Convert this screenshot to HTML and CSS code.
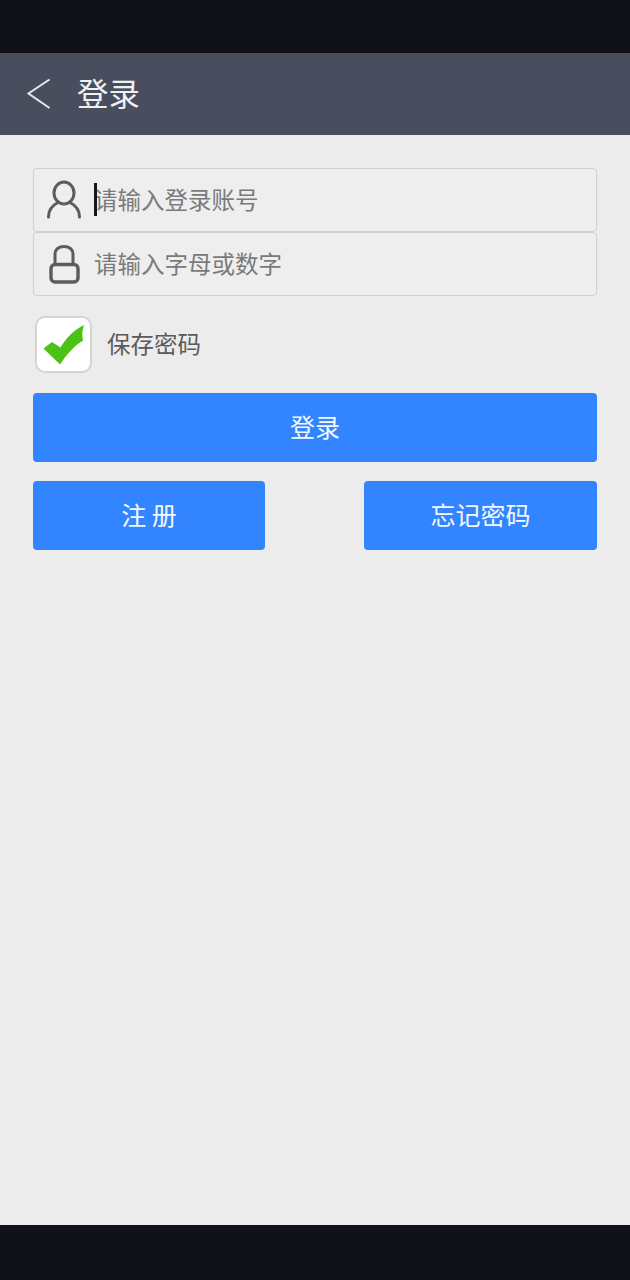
FILE: index.html
```html
<!DOCTYPE html>
<html lang="zh">
<head>
<meta charset="utf-8">
<title>登录</title>
<link rel="stylesheet" href="styles.css">
</head>
<body>
<div class="screen">
  <div class="status-bar"></div>
  <header class="app-header">
    <svg class="back-icon" viewBox="0 0 26 34" width="26" height="34"><path d="M23.5 2.5 L2.5 16.5 L23.5 31" fill="none" stroke="#e6e8ea" stroke-width="2"/></svg>
    <h1 class="title">登录</h1>
  </header>
  <main class="content">
    <div class="fields">
      <div class="field">
        <svg class="field-icon" viewBox="0 0 36 40" width="36" height="40"><ellipse cx="18" cy="13" rx="10" ry="11" fill="none" stroke="#5c5c5c" stroke-width="3"/><path d="M2.5 37 C2.5 30 6 25.5 12 22.5 M33.5 37 C33.5 30 30 25.5 24 22.5" fill="none" stroke="#5c5c5c" stroke-width="3" stroke-linecap="round"/></svg>
        <span class="caret"></span>
        <span class="placeholder">请输入登录账号</span>
      </div>
      <div class="field">
        <svg class="field-icon" viewBox="0 0 36 40" width="36" height="40"><path d="M9 20 V10.5 C9 5 13 2.5 18 2.5 C23 2.5 27 5 27 10.5 V20" fill="none" stroke="#5c5c5c" stroke-width="3"/><rect x="5" y="20.5" width="27" height="17.5" rx="4" fill="none" stroke="#5c5c5c" stroke-width="3.4"/></svg>
        <span class="placeholder">请输入字母或数字</span>
      </div>
    </div>
    <label class="remember">
      <span class="checkbox">
        <svg viewBox="0 0 42 40" width="42" height="40"><path d="M0.5 23.5 L9 17 L17.5 22.5 C23 13 31 5 41 0 C39 5 39 11 40 15.5 C31 21 24 29 17 39.5 Z" fill="#4cc116"/></svg>
      </span>
      <span class="remember-text">保存密码</span>
    </label>
    <button class="btn btn-wide" type="button">登录</button>
    <div class="btn-row">
      <button class="btn btn-left" type="button">注 册</button>
      <button class="btn btn-right" type="button">忘记密码</button>
    </div>
  </main>
  <div class="nav-bar"></div>
</div>
</body>
</html>
```
FILE: styles.css
```css
* { box-sizing: border-box; }
html, body { margin: 0; padding: 0; }
body { font-family: "Noto Sans CJK SC", "Noto Sans", sans-serif; background: #ececec; }
.screen { width: 630px; height: 1280px; display: flex; flex-direction: column; overflow: hidden; }
.status-bar { height: 53px; background: #101217; flex: none; }
.app-header { height: 82px; flex: none; background: #484e5e; display: flex; align-items: center; padding: 0 0 3px 26px; }
.back-icon { flex: none; margin: 3px 25px 0 0; }
.title { margin: 0; font-size: 31.4px; font-weight: 400; color: #eef0f2; line-height: 1; }
.content { flex: 1; padding: 33px 33px 0; background: #ececec; }
.fields { display: flex; flex-direction: column; }
.field { position: relative; height: 64px; border: 1px solid #cfcfcf; border-radius: 4px; background: #eeeeee; display: flex; align-items: center; padding-left: 12px; }
.field-icon { flex: none; margin-right: 12px; }
.caret { position: absolute; left: 60px; top: 14px; width: 3px; height: 33px; background: #16161c; }
.placeholder { font-size: 23.5px; color: #7a7a7a; line-height: 1; }
.remember { display: flex; align-items: center; margin: 20px 0 20px 2px; height: 57px; }
.checkbox { width: 57px; height: 57px; flex: none; background: #fff; border: 2px solid #d4d4d4; border-radius: 10px; display: flex; align-items: center; justify-content: center; }
.remember-text { margin: 0 0 1px 15px; font-size: 23.5px; color: #5a5a5a; line-height: 1; }
.btn { display: block; height: 69px; border: 0; border-radius: 4px; background: #3385ff; color: #f4f8ff; font-family: inherit; font-size: 25px; padding: 0 0 4px; }
.btn-wide { width: 100%; }
.btn-row { display: flex; justify-content: space-between; margin-top: 19px; }
.btn-left { width: 232px; }
.btn-right { width: 233px; }
.nav-bar { height: 55px; flex: none; background: #101217; }
```
